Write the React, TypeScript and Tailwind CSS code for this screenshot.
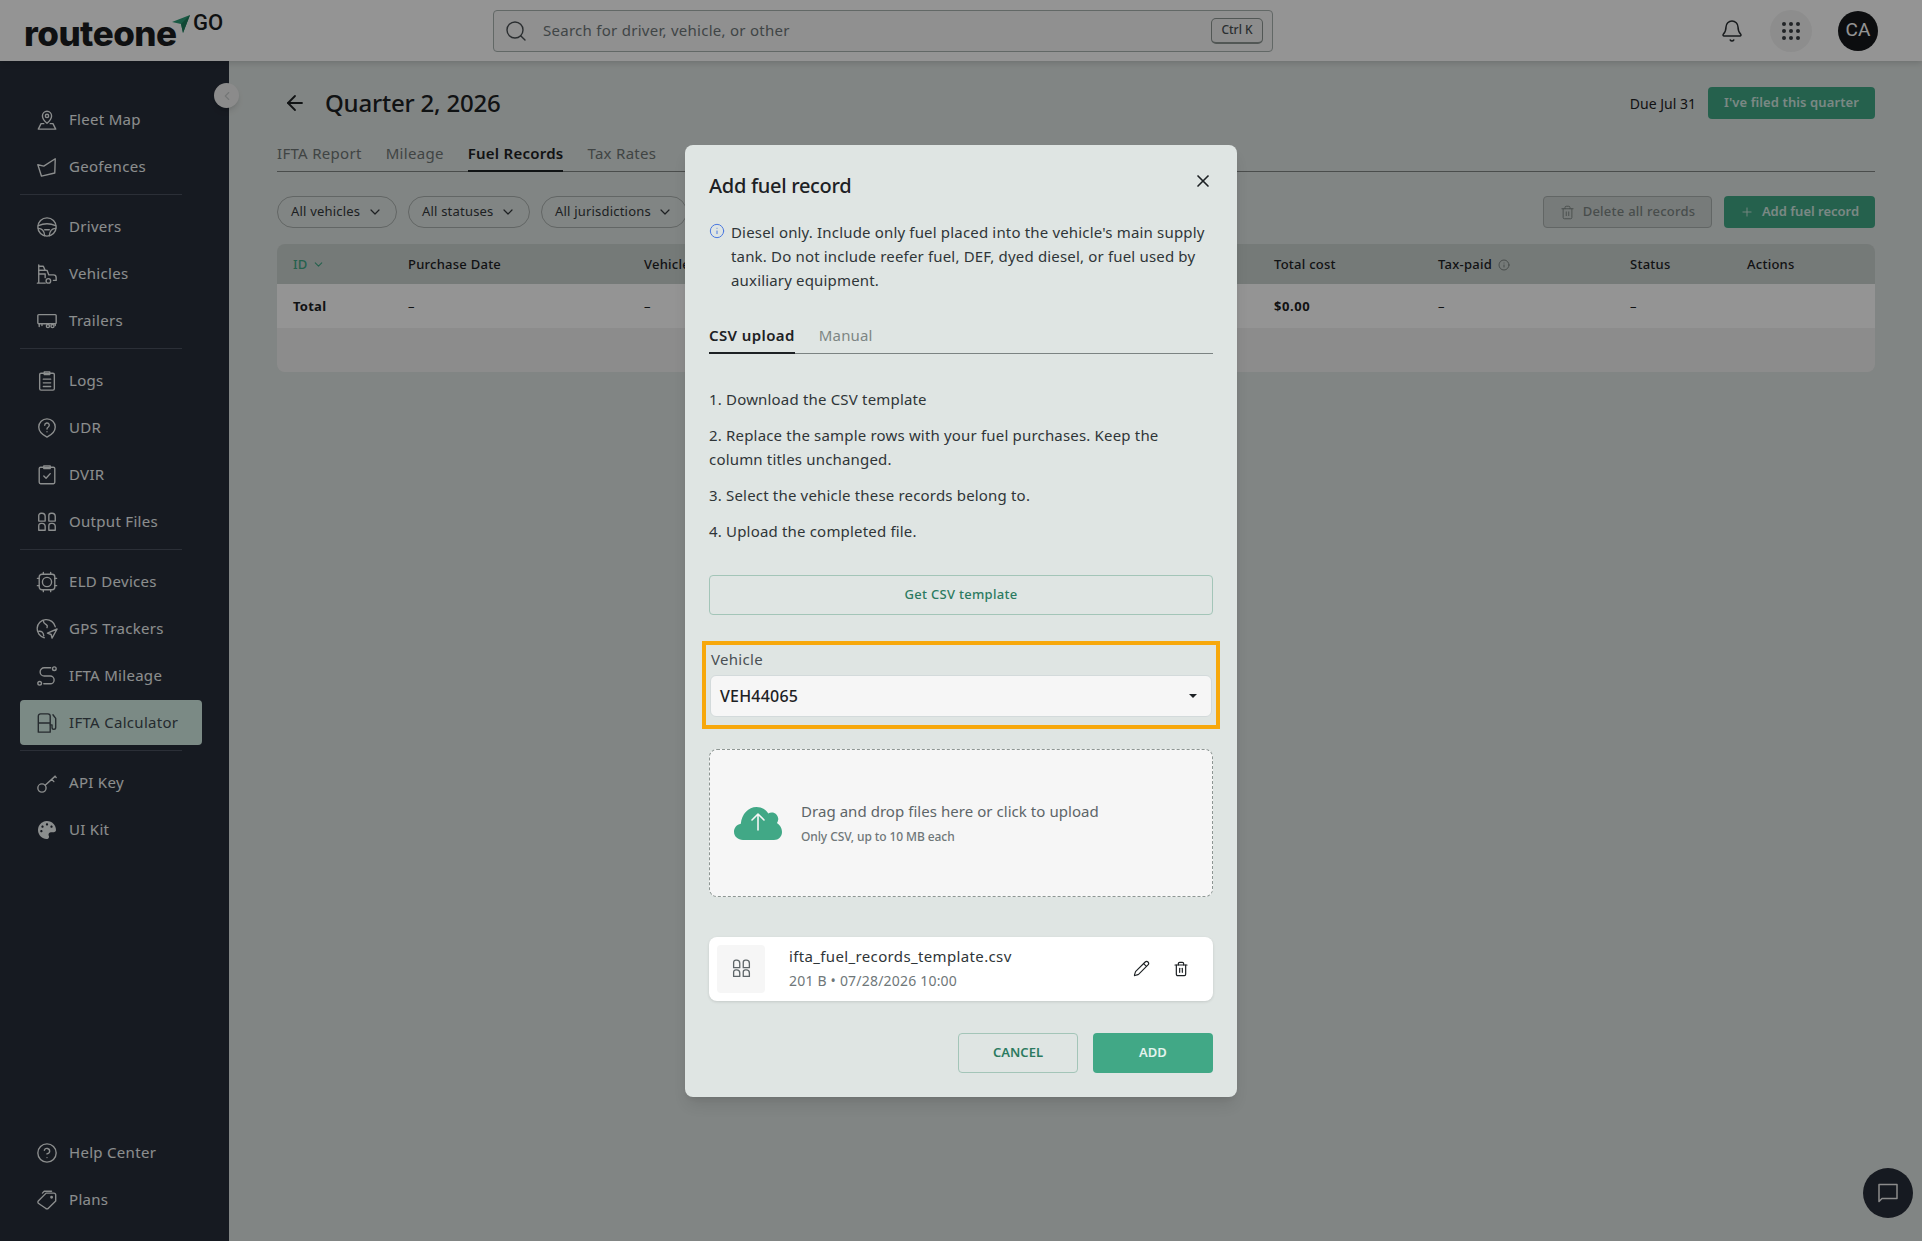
import React from 'react';
import {
  ArrowLeft, Bell, ChevronDown, ChevronLeft, CircleHelp, Info, Pencil, Plus, Search, Trash2, X,
} from 'lucide-react';
import { FaPalette } from 'react-icons/fa';

type IconProps = { className?: string };

const Svg: React.FC<React.PropsWithChildren<IconProps>> = ({ className, children }) => (
  <svg viewBox="0 0 24 24" fill="none" stroke="currentColor" strokeWidth="1.5" strokeLinecap="round" strokeLinejoin="round" className={className}>
    {children}
  </svg>
);

const FleetMapIcon = (p: IconProps) => (
  <Svg {...p}>
    <path d="M12 15.500c-3-2.600-5-5-5-8a5 5 0 0 1 10 0c0 3-2 5.400-5 8Z" />
    <circle cx="12" cy="7.500" r="1.800" />
    <path d="M8.500 16H5.500L2.500 22h19l-3-6h-3" />
  </Svg>
);
const GeofenceIcon = (p: IconProps) => (
  <Svg {...p}>
    <path d="M2 9.500 8.500 11 21 3l-.5 15.500L6 22 2 9.500Z" />
  </Svg>
);
const WheelIcon = (p: IconProps) => (
  <Svg {...p}>
    <circle cx="12" cy="12" r="10" />
    <path d="M2.500 10.500c6-2.500 13-2.500 19 0" />
    <path d="M2.500 13.500c3.500 0 6.500 2.500 7 8M21.500 13.500c-3.500 0-6.500 2.500-7 8" />
    <path d="M9.500 15h5" />
  </Svg>
);
const TruckIcon = (p: IconProps) => (
  <Svg {...p}>
    <path d="M3 2v20M1.500 22H10" />
    <path d="M3 3.500h5l2 4.500H3" />
    <path d="M3 8h9l2 5h5c2 0 3 1 3 3v3h-3" />
    <path d="M3 12h7v4" />
    <circle cx="13.500" cy="19.500" r="2.500" />
  </Svg>
);
const TrailerIcon = (p: IconProps) => (
  <Svg {...p}>
    <rect x="2" y="5" width="20" height="10" rx="1" />
    <path d="M3.500 15v3M6.500 15v2" />
    <circle cx="13" cy="17.500" r="1.700" />
    <circle cx="18" cy="17.500" r="1.700" />
    <path d="M21 15v2" />
  </Svg>
);
const LogsIcon = (p: IconProps) => (
  <Svg {...p}>
    <rect x="4" y="3.500" width="16" height="18.500" rx="1.500" />
    <path d="M9 2h6v3H9zM8 10h8M8 14h8M8 18h8" />
  </Svg>
);
const UdrIcon = (p: IconProps) => (
  <Svg {...p}>
    <path d="M12 22c-5-2.500-9-6-9-11a9 9 0 0 1 18 0c0 5-4 8.500-9 11Z" />
    <path d="M9.500 9a2.500 2.500 0 1 1 3.700 2.200c-.8.500-1.200 1-1.200 2" />
    <path d="M12 16v.2" />
  </Svg>
);
const DvirIcon = (p: IconProps) => (
  <Svg {...p}>
    <rect x="3.500" y="3.500" width="17" height="18" rx="1.500" />
    <path d="M8.500 2h7v3h-7zM8.500 13l2.500 2.500 4.500-5" />
  </Svg>
);
const FilesIcon = (p: IconProps) => (
  <Svg {...p}>
    <path d="M3 11V5a2.500 2.500 0 0 1 2.500-2.500h1A3.500 3.500 0 0 1 10 6v5H3ZM14 11V5a2.500 2.500 0 0 1 2.500-2.500h1A3.500 3.500 0 0 1 21 6v5h-7Z" />
    <path d="M3 21v-5a2.500 2.500 0 0 1 2.500-2.500h1A3.500 3.500 0 0 1 10 17v4H3ZM14 21v-5a2.500 2.500 0 0 1 2.500-2.500h1A3.500 3.500 0 0 1 21 17v4h-7Z" />
  </Svg>
);
const EldIcon = (p: IconProps) => (
  <Svg {...p}>
    <rect x="3.500" y="3.500" width="17" height="17" rx="3" />
    <circle cx="12" cy="12" r="5" />
    <path d="M8 1.500v2M16 1.500v2M8 20.500v2M16 20.500v2M1.500 8h2M1.500 16h2M20.500 8h2M20.500 16h2" />
  </Svg>
);
const GpsIcon = (p: IconProps) => (
  <Svg {...p}>
    <path d="M21 9.500A10 10 0 1 0 9 21.500" />
    <path d="M3 14.500c3-.5 5 1 5.500 5M8 3c0 3 2 3.500 3.500 4.500 1 .7 1 2 .5 3" />
    <path d="M23 12 12.500 16.500l4 1.500 1 4L23 12Z" />
  </Svg>
);
const RouteIcon = (p: IconProps) => (
  <Svg {...p}>
    <circle cx="20" cy="4" r="2" />
    <circle cx="4" cy="20" r="2" />
    <path d="M16 3H9a4.500 4.500 0 0 0 0 9h6.500a3.500 3.500 0 0 1 0 8.500H8.500" />
  </Svg>
);
const FuelIcon = (p: IconProps) => (
  <Svg {...p}>
    <path d="M2.500 22V4.500A2.500 2.500 0 0 1 5 2h8a2.500 2.500 0 0 1 2.500 2.500V22h-13ZM2.500 12h13" />
    <path d="M18.500 3 21.500 7v10a2 2 0 0 1-4 0v-3h-2" />
  </Svg>
);
const KeyIcon = (p: IconProps) => (
  <Svg {...p}>
    <circle cx="6.500" cy="17.500" r="4.500" />
    <path d="m10 14.500 11-10M17 8l2.500 2.500M20.500 4.500l1.500 1.500" />
  </Svg>
);
const TagsIcon = (p: IconProps) => (
  <Svg {...p}>
    <path d="M2.500 13 11 4.500h8.500a2 2 0 0 1 2 2V13L13.500 21a2 2 0 0 1-3 0l-8-5.500a2 2 0 0 1 0-2.500Z" />
    <path d="M7 4.500 9 2.500h8" />
    <circle cx="17" cy="9" r=".8" />
  </Svg>
);

const DotsIcon = () => (
  <div className="grid grid-cols-3 gap-[3px]">
    {Array.from({ length: 9 }).map((_, i) => (
      <span key={i} className="h-[4px] w-[4px] rounded-full bg-[#3a3f44]" />
    ))}
  </div>
);

const CloudIcon = () => (
  <svg viewBox="0 0 48 34" className="h-[34px] w-[48px]">
    <path fill="#41a886" d="M9 34C4 34 0 30.500 0 25.800c0-4 2.800-7.300 6.800-8C7.800 7.800 14.500 1 22.500 1c5 0 9.300 2.200 11.800 6.500 1-.7 2.200-1 3.500-1 3.500 0 6 2.500 6.500 6.500-.2 1.500-.6 3-1.400 4C45.500 18.500 48 22 48 26c0 4.500-3.500 8-8 8H9Z" />
    <path fill="none" stroke="#f6f6f6" strokeWidth="1.600" strokeLinecap="round" strokeLinejoin="round" d="M24 24V8M18 14l6-6 6 6" />
  </svg>
);

interface NavItem {
  label: string;
  icon: React.ReactNode;
  active?: boolean;
}

const ic = 'h-[22px] w-[22px] shrink-0';

const navGroups: NavItem[][] = [
  [
    { label: 'Fleet Map', icon: <FleetMapIcon className={ic} /> },
    { label: 'Geofences', icon: <GeofenceIcon className={ic} /> },
  ],
  [
    { label: 'Drivers', icon: <WheelIcon className={ic} /> },
    { label: 'Vehicles', icon: <TruckIcon className={ic} /> },
    { label: 'Trailers', icon: <TrailerIcon className={ic} /> },
  ],
  [
    { label: 'Logs', icon: <LogsIcon className={ic} /> },
    { label: 'UDR', icon: <UdrIcon className={ic} /> },
    { label: 'DVIR', icon: <DvirIcon className={ic} /> },
    { label: 'Output Files', icon: <FilesIcon className={ic} /> },
  ],
  [
    { label: 'ELD Devices', icon: <EldIcon className={ic} /> },
    { label: 'GPS Trackers', icon: <GpsIcon className={ic} /> },
    { label: 'IFTA Mileage', icon: <RouteIcon className={ic} /> },
    { label: 'IFTA Calculator', icon: <FuelIcon className={ic} />, active: true },
  ],
  [
    { label: 'API Key', icon: <KeyIcon className={ic} /> },
    { label: 'UI Kit', icon: <FaPalette className="ml-[2px] mr-[2px] h-[18px] w-[18px] shrink-0" /> },
  ],
];

const NavRow: React.FC<{ item: NavItem }> = ({ item }) => (
  <a
    className={
      item.active
        ? 'flex h-[45px] w-[182px] items-center gap-[11px] rounded-[4px] bg-[#d4eee5] px-[16px] text-[15px] tracking-[0.3px] text-[#414a51]'
        : 'flex h-[45px] w-[182px] items-center gap-[11px] rounded-[4px] px-[16px] text-[15px] tracking-[0.3px] text-[#f0f4f4]'
    }
  >
    {item.icon}
    <span>{item.label}</span>
  </a>
);

const Sidebar = () => (
  <aside className="relative flex w-[229px] shrink-0 flex-col justify-between bg-[#272d39] pb-[19px] pl-[20px] pt-[36px]">
    <nav className="flex flex-col gap-[2px]">
      {navGroups.map((group, i) => (
        <React.Fragment key={i}>
          {i > 0 && <hr className="mb-[7px] mt-[3px] w-[162px] border-[#4a5160]" />}
          {group.map((item) => (
            <NavRow key={item.label} item={item} />
          ))}
        </React.Fragment>
      ))}
    </nav>
    <nav className="flex flex-col gap-[2px]">
      <NavRow item={{ label: 'Help Center', icon: <CircleHelp className={ic} strokeWidth={1.5} /> }} />
      <NavRow item={{ label: 'Plans', icon: <TagsIcon className={ic} /> }} />
    </nav>
    <button className="absolute left-[214px] top-[22px] flex h-[25px] w-[25px] items-center justify-center rounded-full bg-[#f0f0f0] text-[#c8cccc] shadow-md">
      <ChevronLeft className="h-[14px] w-[14px]" />
    </button>
  </aside>
);

const Header = () => (
  <header className="relative z-10 flex h-[61px] shrink-0 items-center bg-white pl-[24px] pr-[44px] shadow-[0_2px_6px_rgba(0,0,0,0.15)]">
    <div className="flex w-[469px] shrink-0 items-start">
      <span className="mt-[6px] inline-block w-[152px] origin-left scale-x-[1.03] font-['Inter',sans-serif] text-[34px] font-extrabold leading-[40px] tracking-[-0.5px] text-[#1b1d20]">routeone</span>
      <svg viewBox="0 0 18 18" className="-ml-[4px] mt-[7px] h-[18px] w-[18px]">
        <path fill="#2b9a75" d="M18 0 0 7l9 2 2 9Z" />
        <path fill="#1e7a5b" d="M18 0 9 9l2 9Z" />
      </svg>
      <span className="ml-[3px] mt-[3px] font-['Roboto',sans-serif] text-[22px] font-medium leading-[24px] text-[#1b1d20]">GO</span>
    </div>
    <div className="flex h-[42px] w-[780px] items-center rounded-[4px] border border-[#a9b3b0] bg-[#f8f8f8] pl-[10px] pr-[9px]">
      <Search className="h-[24px] w-[24px] text-[#4a5054]" strokeWidth={1.4} />
      <span className="ml-[15px] text-[15px] tracking-[0.27px] text-[#6f7779]">Search for driver, vehicle, or other</span>
      <kbd className="ml-auto flex h-[26px] w-[52px] items-center justify-center rounded-[5px] border border-b-2 border-[#8d9693] bg-[#f3f3f3] font-['Noto_Sans',sans-serif] text-[12px] font-medium text-[#4a5054]">Ctrl K</kbd>
    </div>
    <Bell className="ml-[447px] h-[24px] w-[24px] text-[#2c3134]" strokeWidth={1.5} />
    <div className="ml-[26px] flex h-[42px] w-[42px] items-center justify-center rounded-full bg-[#f3f3f3]">
      <DotsIcon />
    </div>
    <div className="ml-[26px] flex h-[40px] w-[40px] items-center justify-center rounded-full bg-[#15171a] font-['Roboto',sans-serif] text-[19px] text-white">CA</div>
  </header>
);

const FilterPill: React.FC<{ label: string; width: string }> = ({ label, width }) => (
  <button className={`flex h-[32px] items-center justify-between rounded-full border border-[#a9b0ae] pl-[13px] pr-[13px] text-[13px] tracking-[0.2px] text-[#33383b] ${width}`}>
    {label}
    <ChevronDown className="h-[16px] w-[16px]" strokeWidth={1.8} />
  </button>
);

const cols = 'grid grid-cols-[115px_236px_630px_164px_192px_117px_1fr] items-center pl-[16px] pt-[1px] tracking-[0.25px]';

const Main = () => (
  <main className="min-w-0 flex-1 bg-[#dfe5e3] pl-[48px] pr-[47px] pt-[26px]">
    <div className="flex h-[32px] items-center">
      <ArrowLeft className="ml-[6px] h-[24px] w-[24px] text-[#1d2124]" strokeWidth={1.8} />
      <h1 className="ml-[18px] text-[24px] font-medium tracking-[-0.2px] text-[#1d2124]">Quarter 2, 2026</h1>
      <span className="ml-auto text-[14px] text-[#1d2124]">Due Jul 31</span>
      <button className="ml-[12px] h-[32px] w-[167px] rounded-[4px] bg-[#41a886] text-[13px] font-semibold tracking-[0.1px] text-[#d5ebe3]">I've filed this quarter</button>
    </div>

    <div className="mt-[24px] flex gap-[24px] border-b border-[#808684] text-[15px] tracking-[0.3px] text-[#6e7675]">
      <span className="pb-[8px] leading-[20px]">IFTA Report</span>
      <span className="pb-[8px] leading-[20px]">Mileage</span>
      <span className="-mb-px border-b-2 border-[#1d2124] pb-[7px] font-semibold leading-[20px] tracking-[0.25px] text-[#1d2124]">Fuel Records</span>
      <span className="pb-[8px] leading-[20px]">Tax Rates</span>
    </div>

    <div className="mt-[24px] flex items-center gap-[11px]">
      <FilterPill label="All vehicles" width="w-[120px]" />
      <FilterPill label="All statuses" width="w-[122px]" />
      <FilterPill label="All jurisdictions" width="w-[146px]" />
      <button className="ml-auto flex h-[32px] w-[169px] items-center justify-center gap-[8px] rounded-[4px] border border-[#a9b0ae] bg-[#ced5d3] text-[13px] font-medium tracking-[0.25px] text-[#7d8583]">
        <Trash2 className="h-[15px] w-[15px]" strokeWidth={1.5} />
        Delete all records
      </button>
      <button className="ml-[1px] flex h-[32px] w-[151px] items-center justify-center gap-[8px] rounded-[4px] bg-[#41a886] text-[13px] font-semibold text-[#d5ebe3]">
        <Plus className="h-[14px] w-[14px]" strokeWidth={1.5} />
        Add fuel record
      </button>
    </div>

    <div className="mt-[16px] overflow-hidden rounded-[8px] text-[13px] text-[#1d2124]">
      <div className={`${cols} h-[40px] bg-[#cad2cf] font-medium`}>
        <span className="flex items-center gap-[4px] text-[#41a886]">ID <ChevronDown className="h-[13px] w-[13px]" /></span>
        <span>Purchase Date</span>
        <span>Vehicle</span>
        <span>Total cost</span>
        <span className="flex items-center gap-[6px]">Tax-paid <Info className="h-[12px] w-[12px] text-[#7d8583]" /></span>
        <span>Status</span>
        <span>Actions</span>
      </div>
      <div className={`${cols} h-[44px] bg-white`}>
        <span className="font-bold">Total</span>
        <span>–</span>
        <span>–</span>
        <span className="font-bold tracking-[0.6px]">$0.00</span>
        <span>–</span>
        <span>–</span>
        <span />
      </div>
      <div className="h-[44px] bg-[#f2f2f2]" />
    </div>
  </main>
);

const steps = [
  '1. Download the CSV template',
  '2. Replace the sample rows with your fuel purchases. Keep the column titles unchanged.',
  '3. Select the vehicle these records belong to.',
  '4. Upload the completed file.',
];

const FuelRecordDialog = () => (
  <div className="relative w-[552px] rounded-[8px] bg-[#dfe5e3] px-[24px] pb-[24px] pt-[24px] text-[#2f3538] shadow-lg">
    <h2 className="mt-[3px] text-[20px] font-medium leading-[28px] tracking-[-0.3px] text-[#1d2124]">Add fuel record</h2>
    <button className="absolute right-[24px] top-[26px] text-[#1d2124]">
      <X className="h-[20px] w-[20px]" strokeWidth={2} />
    </button>

    <div className="mt-[20px] flex gap-[6px] text-[15px] leading-[24px] tracking-[0.17px]">
      <Info className="mt-[3px] h-[16px] w-[16px] shrink-0 text-[#4a78e0]" strokeWidth={1.5} />
      <p>Diesel only. Include only fuel placed into the vehicle's main supply tank. Do not include reefer fuel, DEF, dyed diesel, or fuel used by auxiliary equipment.</p>
    </div>

    <div className="mt-[33px] flex gap-[24px] border-b border-[#7b8382] text-[15px]">
      <span className="-mb-px border-b-2 border-[#1d2124] pb-[7px] font-semibold leading-[20px] tracking-[0.4px] text-[#1d2124]">CSV upload</span>
      <span className="pb-[8px] leading-[20px] tracking-[0.15px] text-[#7d8583]">Manual</span>
    </div>

    <div className="mt-[33px] flex flex-col gap-[12px] text-[15px] leading-[24px] tracking-[0.18px]">
      {steps.map((s) => (
        <p key={s}>{s}</p>
      ))}
    </div>

    <button className="mt-[32px] h-[40px] w-full rounded-[4px] border border-[#a3c5b8] pt-[1px] text-[13px] font-medium tracking-[0.3px] text-[#2b7a60]">Get CSV template</button>

    <div className="-mx-[7px] mt-[26px] border-[4px] border-[#f7a80c] px-[4px] pb-[8px] pt-[4px]">
      <label className="ml-[1px] block text-[15px] leading-[20px] tracking-[0.3px] text-[#4a5054]">Vehicle</label>
      <div className="mt-[6px] flex h-[42px] items-center justify-between rounded-[6px] border border-[#d3dadb] bg-[#f6f6f6] pl-[9px] pr-[14px] text-[16px] font-medium tracking-[0.2px] text-[#1d2124]">
        VEH44065
        <span className="h-0 w-0 border-x-[4px] border-t-[4px] border-x-transparent border-t-[#1d2124]" />
      </div>
    </div>

    <div className="mt-[20px] flex h-[148px] items-center gap-[19px] rounded-[8px] border border-dashed border-[#8d9693] bg-[#f6f6f6] pl-[24px]">
      <CloudIcon />
      <div>
        <p className="text-[15px] leading-[20px] tracking-[0.05px] text-[#5d6568]">Drag and drop files here or click to upload</p>
        <p className="mt-[8px] text-[12px] font-medium leading-[16px] tracking-[-0.1px] text-[#6f7779]">Only CSV, up to 10 MB each</p>
      </div>
    </div>

    <div className="mt-[40px] flex h-[64px] items-center rounded-[8px] bg-white pl-[8px] pr-[24px] shadow-[0_1px_3px_rgba(0,0,0,0.12)]">
      <div className="flex h-[48px] w-[48px] items-center justify-center rounded-[4px] bg-[#f6f6f6] text-[#5d6568]">
        <FilesIcon className="h-[21px] w-[21px]" />
      </div>
      <div className="ml-[24px]">
        <p className="text-[15px] leading-[20px] tracking-[0.36px] text-[#2f3538]">ifta_fuel_records_template.csv</p>
        <p className="mt-[5px] text-[14px] leading-[20px] tracking-[0.2px] text-[#6f7779]">201 B • 07/28/2026 10:00</p>
      </div>
      <Pencil className="ml-auto h-[17px] w-[17px] text-[#1d2124]" strokeWidth={1.6} />
      <Trash2 className="ml-[23px] h-[16px] w-[16px] text-[#1d2124]" strokeWidth={1.8} />
    </div>

    <div className="mt-[32px] flex justify-end gap-[15px]">
      <button className="h-[40px] w-[120px] rounded-[4px] border border-[#a3c5b8] pt-[1px] text-[13px] font-semibold text-[#2b7a60]">CANCEL</button>
      <button className="h-[40px] w-[120px] rounded-[4px] bg-[#41a886] pt-[1px] text-[13px] font-semibold text-[#e3f3ed]">ADD</button>
    </div>
  </div>
);

export default function App() {
  return (
    <div className="relative flex h-[1241px] w-full flex-col overflow-hidden bg-[#dfe5e3] font-['Noto_Sans',sans-serif]">
      <Header />
      <div className="flex min-h-0 flex-1">
        <Sidebar />
        <Main />
      </div>
      <button className="absolute bottom-[23px] right-[9px] flex h-[50px] w-[50px] items-center justify-center rounded-full bg-[#272d39] text-[#f0f0f0]">
        <svg viewBox="0 0 24 24" fill="none" stroke="currentColor" strokeWidth="1.5" className="h-[24px] w-[24px]">
          <path d="M3 3.500h18v14H6l-3 3v-17Z" strokeLinejoin="round" />
        </svg>
      </button>
      <div className="absolute inset-0 z-20 flex items-center justify-center bg-[rgba(0,0,0,0.42)]">
        <FuelRecordDialog />
      </div>
    </div>
  );
}
